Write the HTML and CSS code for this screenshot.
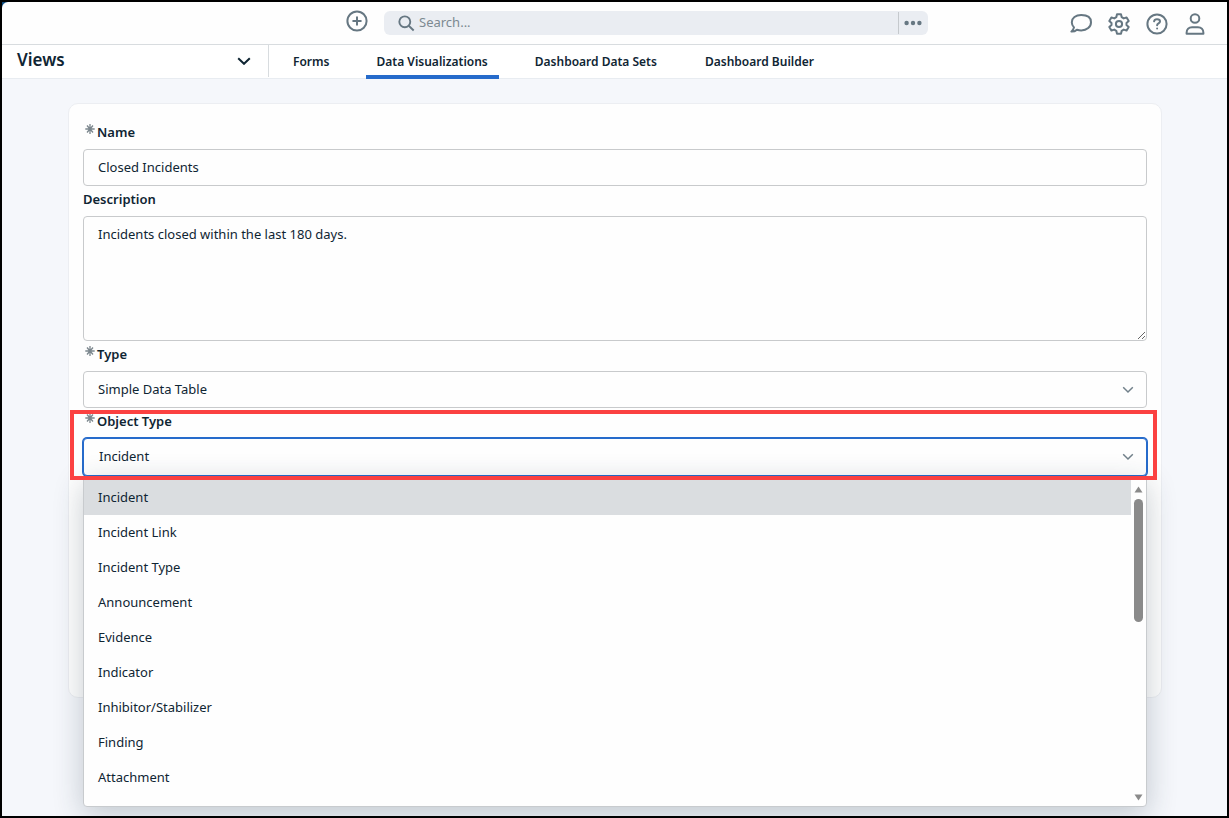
FILE: index.html
```html
<!DOCTYPE html>
<html lang="en">
<head>
<meta charset="utf-8">
<meta name="viewport" content="width=device-width, initial-scale=1">
<title>Data Visualizations</title>
<link rel="stylesheet" href="styles.css">
</head>
<body>
<div class="app">
  <header class="topbar">
    <div class="topbar-center">
      <button class="icon-button" type="button" aria-label="Create">
        <svg class="icon" viewBox="0 0 22 22"><circle cx="11" cy="11" r="9.6"/><path d="M11 7.200v7.600M7.200 11h7.600"/></svg>
      </button>
      <form class="search" role="search">
        <svg class="search-icon" viewBox="0 0 18 18"><circle cx="7.2" cy="7.2" r="5.8"/><path d="M11.4 11.4l5.2 5"/></svg>
        <input class="search-input" type="search" placeholder="Search..." aria-label="Search">
        <button class="search-more" type="button" aria-label="Search options">
          <svg class="dots" viewBox="0 0 18 6"><circle cx="2.6" cy="3" r="2.2"/><circle cx="9" cy="3" r="2.2"/><circle cx="15.4" cy="3" r="2.2"/></svg>
        </button>
      </form>
    </div>
    <div class="topbar-actions">
      <button class="icon-button" type="button" aria-label="Messages">
        <svg class="icon" viewBox="0 0 22 22"><path d="M11.200 2C5.700 2 1.800 5 1.800 9.200c0 2 .8 3.800 2.200 5.200-.3 1.600-1.300 2.900-2.600 4.200 2.200.1 4.100-.6 5.500-1.900 1.300.4 2.700.7 4.300.7 5.700 0 9.800-3.400 9.800-8.200S16.900 2 11.200 2z"/></svg>
      </button>
      <button class="icon-button" type="button" aria-label="Settings">
        <svg class="icon" viewBox="0 0 22 22"><path d="M9 1.300h4l.7 2.900 2 1.200 2.900-.9 2.100 3.600-2.200 2v1.800l2.200 2-2.100 3.600-2.900-.9-2 1.200-.7 2.900H9l-.7-2.900-2-1.200-2.900.9-2.100-3.600 2.200-2v-1.800l-2.200-2 2.100-3.600 2.900.9 2-1.200z"/><circle cx="11" cy="11" r="3.100"/></svg>
      </button>
      <button class="icon-button" type="button" aria-label="Help">
        <svg class="icon" viewBox="0 0 22 22"><circle cx="11" cy="11" r="9.600"/><path d="M8.100 8.300C8.300 6.900 9.500 6.200 11 6.200c1.700 0 3 .9 3 2.300 0 2-2.900 1.900-2.900 3.800M11.100 15.400v.2"/></svg>
      </button>
      <button class="icon-button" type="button" aria-label="Account">
        <svg class="icon" viewBox="0 0 22 22"><circle cx="11" cy="5.500" r="4.300"/><path d="M2.600 20.700v-1c0-3.300 2.200-5.500 5.400-5.500h6c3.200 0 5.400 2.200 5.400 5.500v1z"/></svg>
      </button>
    </div>
  </header>

  <div class="subbar">
    <button class="views" type="button">
      <span>Views</span>
      <svg class="views-chevron" viewBox="0 0 14 8"><path d="M1.200 1.200L7 6.800l5.800-5.600"/></svg>
    </button>
    <nav class="tabs">
      <a class="tab" href="#forms">Forms</a>
      <a class="tab tab-active" href="#visualizations" aria-current="page">Data Visualizations</a>
      <a class="tab" href="#data-sets">Dashboard Data Sets</a>
      <a class="tab" href="#builder">Dashboard Builder</a>
    </nav>
  </div>

  <main class="content">
    <form class="card">
      <div class="field">
        <label class="label label-required" for="name"><svg class="star" viewBox="0 0 10 10"><path d="M5 0v10M.3 5h9.400M2 1.500l6 7M8 1.500l-6 7"/></svg>Name</label>
        <input class="control" id="name" type="text" value="Closed Incidents">
      </div>
      <div class="field">
        <label class="label" for="description">Description</label>
        <textarea class="control control-area" id="description">Incidents closed within the last 180 days.</textarea>
      </div>
      <div class="field">
        <label class="label label-required" for="type"><svg class="star" viewBox="0 0 10 10"><path d="M5 0v10M.3 5h9.400M2 1.500l6 7M8 1.500l-6 7"/></svg>Type</label>
        <div class="select-wrap">
          <select class="control" id="type"><option>Simple Data Table</option></select>
          <svg class="select-chevron" viewBox="0 0 12 8"><path d="M1.200 1.200L6 6l4.800-4.800"/></svg>
        </div>
      </div>
      <div class="field">
        <label class="label label-required" for="object-type"><svg class="star" viewBox="0 0 10 10"><path d="M5 0v10M.3 5h9.400M2 1.500l6 7M8 1.500l-6 7"/></svg>Object Type</label>
        <div class="select-wrap">
          <select class="control control-focused" id="object-type"><option>Incident</option></select>
          <svg class="select-chevron" viewBox="0 0 12 8"><path d="M1.200 1.200L6 6l4.800-4.800"/></svg>
        </div>
        <div class="popup">
          <ul class="options" role="listbox" aria-label="Object Type">
            <li class="option option-active" role="option" aria-selected="true">Incident</li>
            <li class="option" role="option">Incident Link</li>
            <li class="option" role="option">Incident Type</li>
            <li class="option" role="option">Announcement</li>
            <li class="option" role="option">Evidence</li>
            <li class="option" role="option">Indicator</li>
            <li class="option" role="option">Inhibitor/Stabilizer</li>
            <li class="option" role="option">Finding</li>
            <li class="option" role="option">Attachment</li>
          </ul>
          <div class="scrollbar" aria-hidden="true">
            <svg class="scroll-arrow" viewBox="0 0 9 7"><path d="M4.500.5L8.500 6.500h-8z"/></svg>
            <div class="scroll-track"><div class="scroll-thumb"></div></div>
            <svg class="scroll-arrow" viewBox="0 0 9 7"><path d="M4.500 6.500L.5.500h8z"/></svg>
          </div>
        </div>
        <div class="highlight"></div>
      </div>
    </form>
  </main>
</div>
</body>
</html>
```
FILE: styles.css
```css
* {
  box-sizing: border-box;
}

body {
  margin: 0;
  background: #0d3a5c;
  color: #0f2533;
  font-family: "Noto Sans", "Open Sans", sans-serif;
  font-size: 13px;
  line-height: 20px;
}

button,
input,
select,
textarea {
  margin: 0;
  color: inherit;
  font: inherit;
}

button {
  padding: 0;
  border: 0;
  background: none;
}

.app {
  display: flex;
  flex-direction: column;
  min-height: 100vh;
  border: 2px solid #000;
  overflow: hidden;
  background: linear-gradient(135deg, #0d4a7c 6px, #f5f7fb 6px);
}

.topbar {
  display: flex;
  justify-content: space-between;
  height: 43px;
  padding: 0 21px 0 28%;
  border-bottom: 1px solid #d8dcdf;
  border-top-left-radius: 6px;
  background: #fefefe;
}

.topbar-center {
  display: flex;
  flex: 0 1 583px;
  gap: 16px;
  padding: 8px 0 0 1px;
}

.icon-button {
  display: flex;
  width: 22px;
  height: 22px;
}

.icon {
  width: 22px;
  height: 22px;
  fill: none;
  stroke: #667782;
  stroke-width: 2;
  stroke-linejoin: round;
  stroke-linecap: round;
}

.search {
  display: flex;
  flex: 1;
  align-items: center;
  height: 24px;
  margin-top: 1px;
  padding-left: 14px;
  border-radius: 6px;
  background: #eaedf2;
}

.search-icon {
  width: 17px;
  height: 17px;
  fill: none;
  stroke: #667782;
  stroke-width: 2;
}

.search-input {
  flex: 1;
  min-width: 0;
  height: 22px;
  padding: 0 4px 2px;
  border: 0;
  outline: 0;
  background: none;
}

.search-input::placeholder {
  color: #7c8991;
}

.search-more {
  display: flex;
  justify-content: center;
  width: 30px;
  height: 22px;
  padding: 8px 2px 0 0;
  border-left: 1px solid #c5c9cd;
}

.dots {
  width: 18px;
  height: 6px;
  fill: #667782;
}

.topbar-actions {
  display: flex;
  gap: 16px;
  padding-top: 11px;
}

.subbar {
  display: flex;
  height: 34px;
  border-bottom: 1px solid #e8ecf1;
  background: #fff;
}

.views {
  display: flex;
  align-items: center;
  justify-content: space-between;
  width: 267px;
  height: 32px;
  padding: 0 17px 0 15px;
  border-right: 1px solid #d8dcdf;
  font-size: 17px;
  font-weight: 600;
}

.views span {
  padding-bottom: 2px;
}

.views-chevron {
  width: 14px;
  height: 8px;
  fill: none;
  stroke: #0f2533;
  stroke-width: 2;
}

.tabs {
  display: flex;
  gap: 24px;
  padding-left: 12px;
}

.tab {
  height: 34px;
  padding: 7px 12px 0;
  color: inherit;
  font-size: 12px;
  font-weight: 600;
  text-decoration: none;
  white-space: nowrap;
}

.tab-active {
  padding: 7px 11px 0;
  border-bottom: 4px solid #266bcb;
}

.content {
  flex: 1;
  padding: 24px 65px 24px 66px;
  background: #f5f7fb;
  border-bottom-left-radius: 6px;
}

.card {
  min-height: 595px;
  padding: 15px 14px 0;
  border: 1px solid #eceef2;
  border-radius: 10px;
  background: #fefefe;
}

.field {
  position: relative;
}

.label {
  display: flex;
  gap: 2px;
  height: 30px;
  padding-top: 3px;
  font-weight: 600;
}

.label-required {
  padding-left: 2px;
}

.star {
  width: 10px;
  height: 10px;
  margin-top: 2px;
  fill: none;
  stroke: #7b868d;
  stroke-width: 1.3;
}

.control {
  display: block;
  width: 100%;
  height: 37px;
  padding: 0 14px;
  border: 1px solid #c8cacc;
  border-radius: 4px;
  outline: 0;
  background: #fefefe;
  appearance: none;
}

input.control,
select.control {
  padding-bottom: 2px;
}

.control-area {
  height: 125px;
  padding-top: 7px;
  resize: vertical;
}

.control-focused {
  height: 38px;
  padding-left: 15px;
  border-color: #266bcb;
  box-shadow: 0 0 0 1px #266bcb;
}

.select-wrap {
  position: relative;
}

.select-chevron {
  position: absolute;
  top: 15px;
  right: 13px;
  width: 12px;
  height: 8px;
  fill: none;
  stroke: #71808a;
  stroke-width: 1.5;
  pointer-events: none;
}

.popup {
  position: absolute;
  top: 100%;
  right: 0;
  left: 0;
  display: flex;
  height: 331px;
  padding-top: 3px;
  border: 1px solid #c8cbce;
  border-radius: 4px;
  background: #fefefe;
  box-shadow: 0 8px 30px rgba(30, 50, 65, 0.24);
}

.options {
  flex: 1;
  margin: 0;
  padding: 0;
  list-style: none;
}

.option {
  height: 35px;
  padding: 7px 14px 0;
}

.option-active {
  background: #dadde0;
}

.scrollbar {
  display: flex;
  flex-direction: column;
  align-items: center;
  width: 15px;
  padding: 6px 0 5px;
}

.scroll-arrow {
  width: 9px;
  height: 7px;
  fill: #8a8a8a;
}

.scroll-track {
  flex: 1;
  padding-top: 6px;
}

.scroll-thumb {
  width: 9px;
  height: 123px;
  border-radius: 5px;
  background: #8a8a8a;
}

.highlight {
  position: absolute;
  inset: 2px -10px -4px -13px;
  border: 4px solid #fb4141;
  pointer-events: none;
}
```
